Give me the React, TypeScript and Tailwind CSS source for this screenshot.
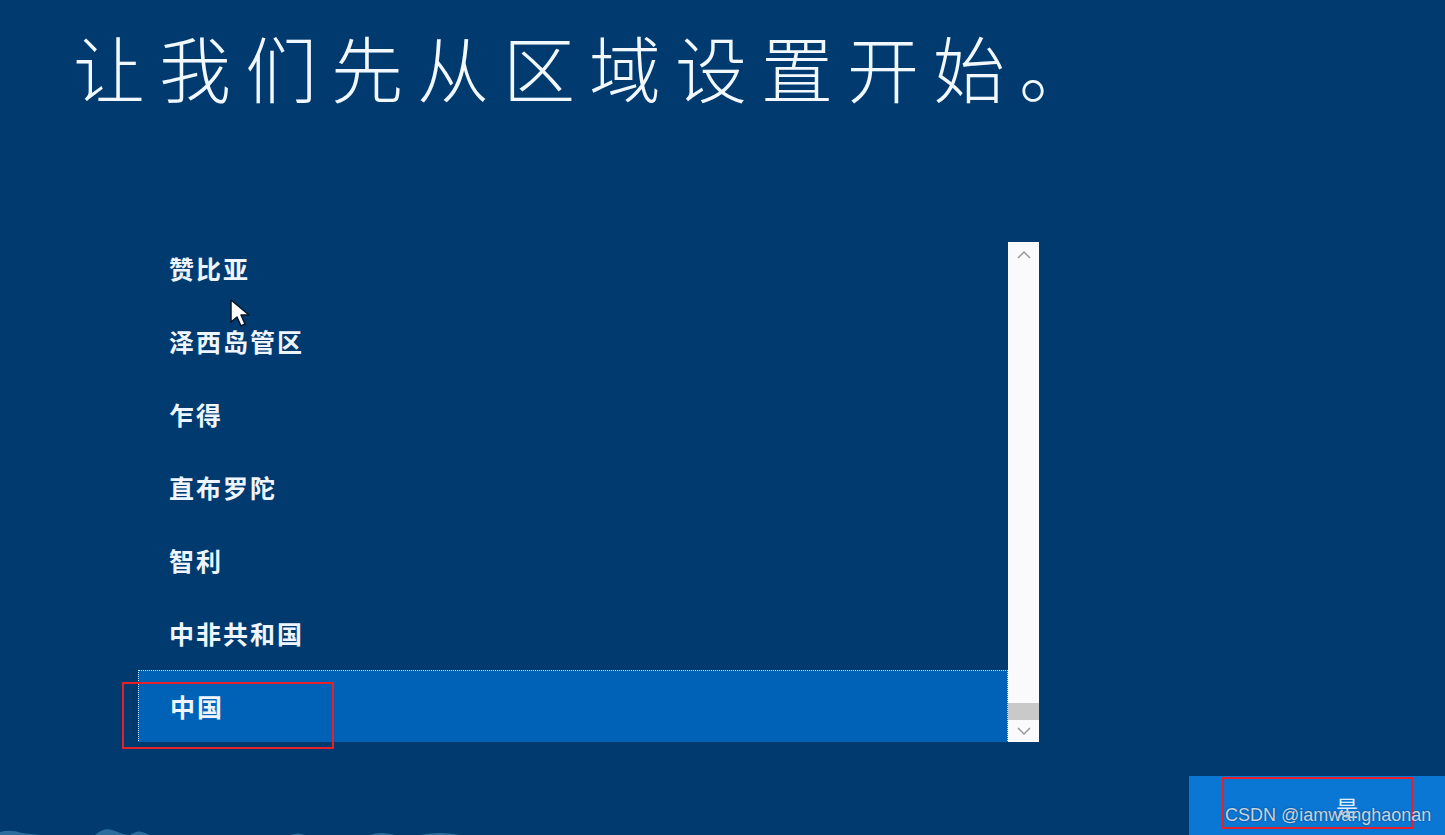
import React from "react";

const items = ["赞比亚", "泽西岛管区", "乍得", "直布罗陀", "智利", "中非共和国", "中国"];

const font = { fontFamily: '"Noto Sans CJK SC", "Microsoft YaHei", sans-serif' };

export default function App() {
  return (
    <div
      className="relative w-[1445px] h-[835px] overflow-hidden bg-[#003a6e] flex flex-col"
      style={font}
    >
      <h1 className="pl-[73px] pt-[26px] text-[72px] leading-[80px] font-light tracking-[14px] text-[#f2f8ff] whitespace-nowrap">
        让我们先从区域设置开始。
      </h1>

      <div className="ml-[138px] mt-[136px] flex w-[901px] h-[500px]">
        <div className="flex-1 overflow-hidden">
          <div className="mt-[-10px] flex flex-col">
            {items.map((it, i) => {
              const sel = i === items.length - 1;
              return (
                <div
                  key={it}
                  className={
                    "h-[73px] flex items-center pl-[31px] text-[25px] font-semibold tracking-[2px] text-[#eef5ff] " +
                    (sel ? "bg-[#0062b6] border border-dotted border-[#d2deec]" : "")
                  }
                >
                  {it}
                </div>
              );
            })}
          </div>
        </div>
        <div className="w-[31px] bg-[#fafafd] flex flex-col items-center justify-between">
          <svg width="16" height="10" viewBox="0 0 16 10" className="mt-[8px]">
            <path d="M2 8 L8 2 L14 8" stroke="#9a9a9a" strokeWidth="1.5" fill="none" />
          </svg>
          <div className="flex flex-col w-full items-center">
            <div className="w-full h-[17px] bg-[#c9c9c9]" />
            <svg width="16" height="10" viewBox="0 0 16 10" className="my-[6px]">
              <path d="M2 2 L8 8 L14 2" stroke="#9a9a9a" strokeWidth="1.5" fill="none" />
            </svg>
          </div>
        </div>
      </div>

      <div className="flex justify-end mt-[34px]">
        <div className="w-[256px] h-[60px] bg-[#0a77d5] flex items-start justify-center pt-[14px] pl-[60px] text-[22px] text-[#dfefff]">
          是
        </div>
      </div>

      {/* mouse cursor */}
      <svg className="absolute left-[229px] top-[298px]" width="26" height="32" viewBox="0 0 26 32">
        <path d="M2 2 L2 24 L8 19 L12 28 L16 26 L12 17 L20 17 Z" fill="#ffffff" stroke="#0a1628" strokeWidth="1.5" strokeLinejoin="round" />
      </svg>

      {/* wave at bottom */}
      <svg className="absolute left-0 bottom-0" width="800" height="12" viewBox="0 0 800 12">
        <path d="M0 12 L0 9 Q10 6 22 10 L40 12 Z" fill="#2c6c9c" />
        <path d="M95 12 Q105 3 115 8 Q125 12 130 12 Z" fill="#2c6c9c" />
        <path d="M130 12 Q138 6 145 10 L150 12 Z" fill="#2c6c9c" />
        <path d="M290 12 Q298 9 305 12 Z" fill="#2c6c9c" />
        <path d="M370 12 Q380 8 395 12 Z" fill="#2c6c9c" />
        <path d="M420 12 Q440 8 460 12 Z" fill="#2c6c9c" />
      </svg>

      {/* annotation red boxes */}
      <div className="absolute left-[122px] top-[682px] w-[212px] h-[67px] border-2 border-[#e8202a]" />
      <div className="absolute left-[1222px] top-[777px] w-[191px] h-[52px] border-2 border-[#e8202a]" />

      {/* watermark */}
      <div
        className="absolute left-[1225px] top-[803px] text-[18px] leading-[24px] text-[#c9d4e0] whitespace-nowrap"
        style={{ fontFamily: '"Liberation Sans", Arial, sans-serif', textShadow: "0 0 2px rgba(0,0,0,0.5)" }}
      >
        CSDN @iamwanghaonan
      </div>
    </div>
  );
}
